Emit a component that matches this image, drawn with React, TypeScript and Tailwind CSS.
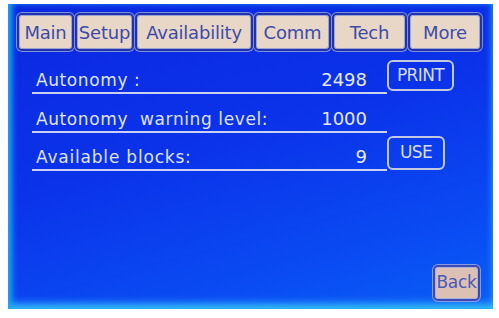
const tabs = [
  { label: "Main", w: "w-[57px]" },
  { label: "Setup", w: "w-[59px]" },
  { label: "Availability", w: "w-[118px]" },
  { label: "Comm", w: "w-[77px]" },
  { label: "Tech", w: "w-[75px]" },
  { label: "More", w: "w-[74px]" },
];

const font = "font-['DejaVu_Sans',sans-serif]";

export default function App() {
  return (
    <div className={`w-[499px] h-[318px] bg-white pt-[4px] pl-[8px] ${font}`}>
      <div className="w-[485px] h-[305px] flex flex-col bg-[linear-gradient(165deg,#0b28e0_0%,#0b33ea_45%,#0a4cf3_80%,#0a5ef6_100%)] shadow-[inset_6px_0_6px_-2px_#1ea6f2,inset_0_-8px_8px_-3px_#38c4fa,inset_-4px_0_6px_-2px_#1a70f4]">
        {/* tab strip */}
        <div className="flex gap-[1px] pl-[9px] pt-[9px]">
          {tabs.map((t) => (
            <div
              key={t.label}
              className={`${t.w} h-[38px] flex items-center justify-center rounded-[5px] border-2 border-[#2232a8] bg-[#e8d7c6] shadow-[0_0_0_1px_#7f8fd8,inset_0_0_0_1px_#9aa4d8] text-[18px] tracking-[-0.2px] text-[#3c4ca6]`}
            >
              {t.label}
            </div>
          ))}
        </div>

        {/* rows */}
        <div className="flex flex-col pl-[24px] mt-[9px]">
          <div className="flex h-[34px]">
            <div className="w-[355px] flex items-end justify-between border-b-2 border-[#c9d0f2] pb-[2px] pl-[4px] pr-[20px]">
              <span className="text-[17px] leading-[20px] tracking-[0.6px] text-[#dfe3f6]">Autonomy :</span>
              <span className="text-[18px] leading-[20px] text-[#e6e9f8]">2498</span>
            </div>
            <div className="w-[67px] h-[31px] flex items-center justify-center rounded-[6px] border-2 border-[#c3c8de] text-[17px] tracking-[-0.6px] text-[#d8dcef]">
              PRINT
            </div>
          </div>

          <div className="flex h-[39px]">
            <div className="w-[355px] flex items-end justify-between border-b-2 border-[#c9d0f2] pb-[2px] pl-[4px] pr-[20px]">
              <span className="text-[17px] leading-[20px] tracking-[0.6px] text-[#dfe3f6] whitespace-pre">Autonomy  warning level:</span>
              <span className="text-[18px] leading-[20px] text-[#e6e9f8]">1000</span>
            </div>
          </div>

          <div className="flex h-[38px]">
            <div className="w-[355px] flex items-end justify-between border-b-2 border-[#c9d0f2] pb-[2px] pl-[4px] pr-[20px]">
              <span className="text-[17px] leading-[20px] tracking-[0.8px] text-[#dfe3f6]">Available blocks:</span>
              <span className="text-[18px] leading-[20px] text-[#e6e9f8]">9</span>
            </div>
            <div className="mt-[3px] w-[58px] h-[34px] flex items-center justify-center rounded-[6px] border-2 border-[#c3c8de] text-[17px] tracking-[-0.6px] text-[#d8dcef]">
              USE
            </div>
          </div>
        </div>

        {/* back */}
        <div className="mt-auto self-end mr-[13px] mb-[8px] w-[47px] h-[36px] flex items-center justify-center rounded-[5px] border-2 border-[#3a4ab4] bg-[#dcc0b4] shadow-[0_0_0_1px_#8a9ae0,inset_0_0_0_1px_#a8b0dc] text-[17px] tracking-[-0.3px] text-[#4a5ab4]">
          Back
        </div>
      </div>
    </div>
  );
}
